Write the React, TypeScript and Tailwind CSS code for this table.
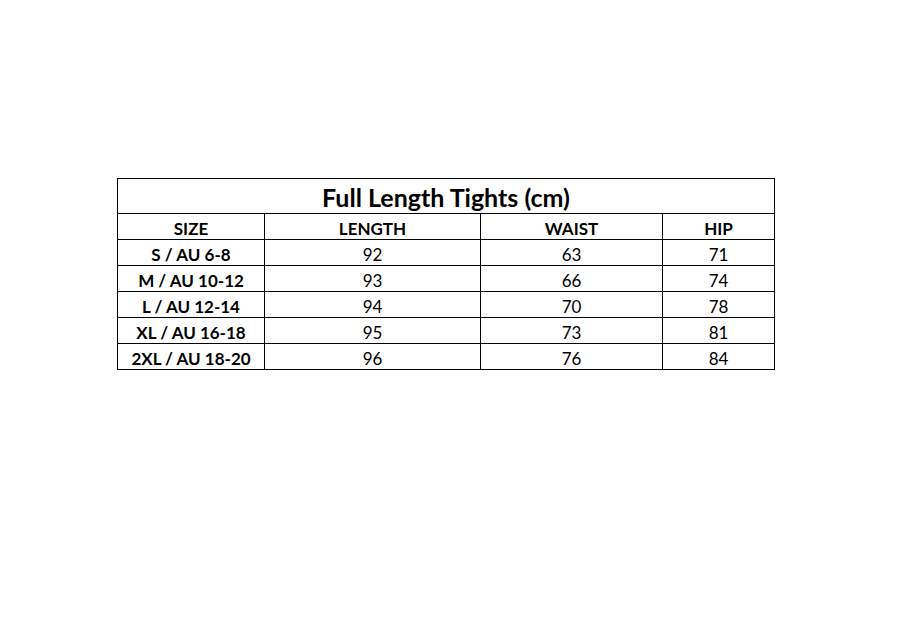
const rows = [
  ["S / AU 6-8", "92", "63", "71"],
  ["M / AU 10-12", "93", "66", "74"],
  ["L / AU 12-14", "94", "70", "78"],
  ["XL / AU 16-18", "95", "73", "81"],
  ["2XL / AU 18-20", "96", "76", "84"],
];

const headers = ["SIZE", "LENGTH", "WAIST", "HIP"];

export default function App() {
  return (
    <div
      className="min-h-[626px] w-[902px] bg-white pl-[117px] pt-[178px] text-black"
      style={{ fontFamily: "Lato, 'Liberation Sans', sans-serif" }}
    >
      <table className="w-[657px] table-fixed border-collapse">
        <colgroup>
          <col className="w-[147px]" />
          <col className="w-[216px]" />
          <col className="w-[182px]" />
          <col className="w-[112px]" />
        </colgroup>
        <thead>
          <tr className="h-[35px]">
            <th
              colSpan={4}
              className="border border-black p-0 pt-[3px] text-[25px] font-bold leading-none"
            >
              Full Length Tights (cm)
            </th>
          </tr>
          <tr className="h-[26px]">
            {headers.map((h) => (
              <th
                key={h}
                className="border border-black p-0 pt-[3px] text-[17px] font-bold leading-none"
              >
                {h}
              </th>
            ))}
          </tr>
        </thead>
        <tbody>
          {rows.map((r) => (
            <tr key={r[0]} className="h-[26px]">
              {r.map((c, i) => (
                <td
                  key={i}
                  className={`border border-black p-0 pt-[3px] text-center text-[17px] leading-none ${
                    i === 0 ? "font-bold" : "font-normal"
                  }`}
                >
                  {c}
                </td>
              ))}
            </tr>
          ))}
        </tbody>
      </table>
    </div>
  );
}
